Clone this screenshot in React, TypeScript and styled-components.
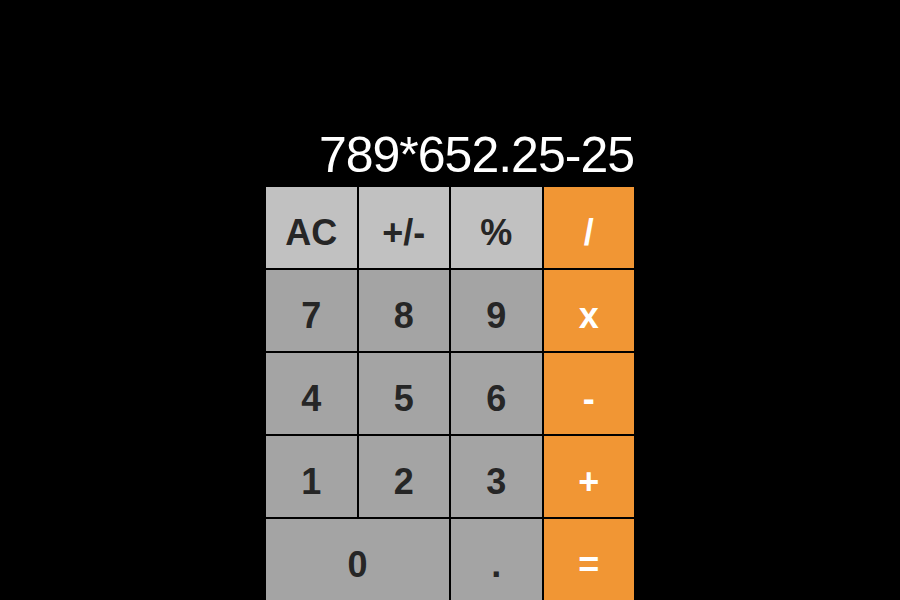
import React from "react";
import styled, { createGlobalStyle } from "styled-components";

const GlobalStyle = createGlobalStyle`
  html, body {
    margin: 0;
    padding: 0;
    background: #000;
  }
  body {
    font-family: "Liberation Sans", Arial, Helvetica, sans-serif;
  }
`;

const Page = styled.div`
  height: 600px;
  width: 900px;
  display: flex;
  flex-direction: column;
  justify-content: flex-end;
  align-items: center;
  background: #000;
  overflow: hidden;
`;

const Calculator = styled.div`
  width: 368px;
  display: flex;
  flex-direction: column;
`;

const Display = styled.div`
  color: #fff;
  font-size: 50px;
  letter-spacing: -1px;
  line-height: 55px;
  text-align: right;
  padding-bottom: 4px;
  white-space: nowrap;
`;

const Keypad = styled.div`
  display: grid;
  grid-template-columns: repeat(4, 1fr);
  grid-auto-rows: 81px;
  gap: 2px;
  background: #000;
`;

type Variant = "func" | "num" | "op";

const bg: Record<Variant, string> = {
  func: "#c1c1c1",
  num: "#a4a4a4",
  op: "#f19634",
};

const Key = styled.button<{ $variant: Variant; $wide?: boolean }>`
  grid-column: ${(p) => (p.$wide ? "span 2" : "span 1")};
  border: none;
  margin: 0;
  padding: 10px 0 0;
  background: ${(p) => bg[p.$variant]};
  color: ${(p) => (p.$variant === "op" ? "#fff" : "#262626")};
  font-family: "Liberation Sans", Arial, Helvetica, sans-serif;
  font-weight: bold;
  font-size: 36px;
  display: flex;
  align-items: center;
  justify-content: center;
  cursor: pointer;
  outline: none;
`;

const keys: { label: string; variant: Variant; wide?: boolean }[] = [
  { label: "AC", variant: "func" },
  { label: "+/-", variant: "func" },
  { label: "%", variant: "func" },
  { label: "/", variant: "op" },
  { label: "7", variant: "num" },
  { label: "8", variant: "num" },
  { label: "9", variant: "num" },
  { label: "x", variant: "op" },
  { label: "4", variant: "num" },
  { label: "5", variant: "num" },
  { label: "6", variant: "num" },
  { label: "-", variant: "op" },
  { label: "1", variant: "num" },
  { label: "2", variant: "num" },
  { label: "3", variant: "num" },
  { label: "+", variant: "op" },
  { label: "0", variant: "num", wide: true },
  { label: ".", variant: "num" },
  { label: "=", variant: "op" },
];

export default function App() {
  return (
    <>
      <GlobalStyle />
      <Page>
        <Calculator>
          <Display>789*652.25-25</Display>
          <Keypad>
            {keys.map((k) => (
              <Key key={k.label} $variant={k.variant} $wide={k.wide}>
                {k.label}
              </Key>
            ))}
          </Keypad>
        </Calculator>
      </Page>
    </>
  );
}
